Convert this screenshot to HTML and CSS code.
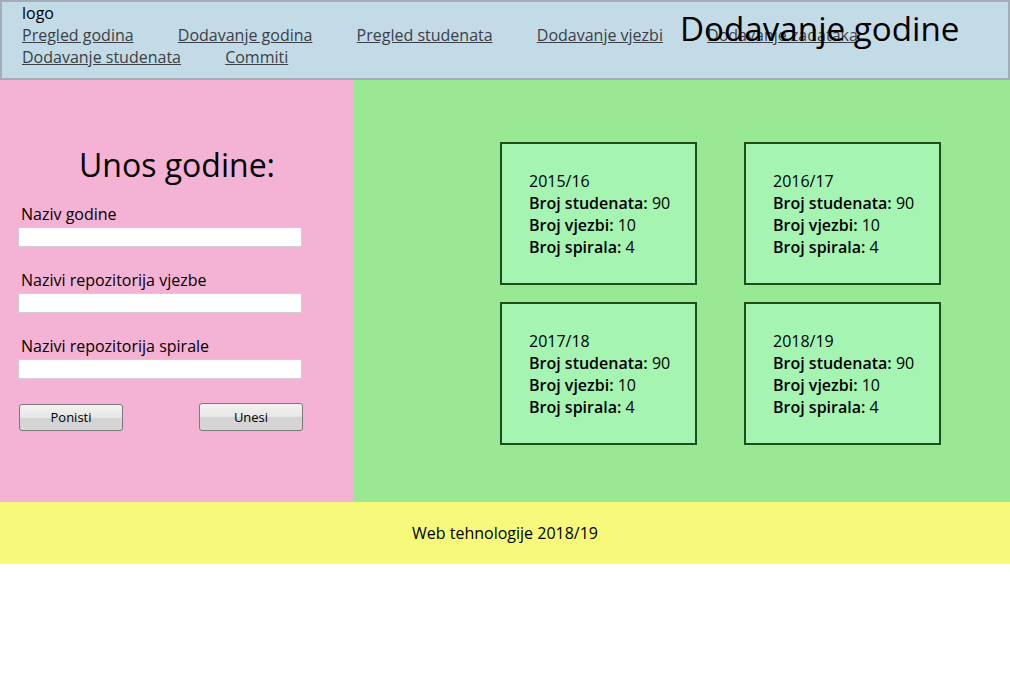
FILE: index.html
```html
<!DOCTYPE html>
<html lang="hr">
<head>
<meta charset="utf-8">
<title>Dodavanje godine</title>
<link rel="stylesheet" href="styles.css">
</head>
<body>
<header class="header">
  <div class="logo">logo</div>
  <nav class="nav">
    <a href="#" class="nav-link">Pregled godina</a>
    <a href="#" class="nav-link">Dodavanje godina</a>
    <a href="#" class="nav-link">Pregled studenata</a>
    <a href="#" class="nav-link">Dodavanje vjezbi</a>
    <a href="#" class="nav-link">Dodavanje zadataka</a>
    <a href="#" class="nav-link">Dodavanje studenata</a>
    <a href="#" class="nav-link">Commiti</a>
  </nav>
  <h1 class="page-title">Dodavanje godine</h1>
</header>
<div class="content">
  <aside class="side">
    <h2 class="side-title">Unos godine:</h2>
    <form class="form">
      <label class="field">
        <span class="field-label">Naziv godine</span>
        <input class="field-input" type="text">
      </label>
      <label class="field">
        <span class="field-label">Nazivi repozitorija vjezbe</span>
        <input class="field-input" type="text">
      </label>
      <label class="field">
        <span class="field-label">Nazivi repozitorija spirale</span>
        <input class="field-input" type="text">
      </label>
      <div class="buttons">
        <button type="reset" class="btn btn-reset">Ponisti</button>
        <button type="submit" class="btn btn-submit">Unesi</button>
      </div>
    </form>
  </aside>
  <main class="main">
    <div class="cards">
      <div class="card">
        <div>2015/16</div>
        <div><b>Broj studenata:</b> 90</div>
        <div><b>Broj vjezbi:</b> 10</div>
        <div><b>Broj spirala:</b> 4</div>
      </div>
      <div class="card">
        <div>2016/17</div>
        <div><b>Broj studenata:</b> 90</div>
        <div><b>Broj vjezbi:</b> 10</div>
        <div><b>Broj spirala:</b> 4</div>
      </div>
      <div class="card">
        <div>2017/18</div>
        <div><b>Broj studenata:</b> 90</div>
        <div><b>Broj vjezbi:</b> 10</div>
        <div><b>Broj spirala:</b> 4</div>
      </div>
      <div class="card">
        <div>2018/19</div>
        <div><b>Broj studenata:</b> 90</div>
        <div><b>Broj vjezbi:</b> 10</div>
        <div><b>Broj spirala:</b> 4</div>
      </div>
    </div>
  </main>
</div>
<footer class="footer">Web tehnologije 2018/19</footer>
</body>
</html>
```
FILE: styles.css
```css
html, body {
  margin: 0;
  padding: 0;
}
body {
  font-family: "Open Sans", "Noto Sans", sans-serif;
  font-size: 16px;
  color: #000;
  background: #fff;
}
.header {
  position: relative;
  box-sizing: border-box;
  height: 80px;
  background: #c3dbe6;
  border: 2px solid #a3adb8;
  padding: 0 0 0 20px;
  line-height: 22px;
}
.logo {
  height: 22px;
}
.nav {
  line-height: 22px;
}
.nav-link {
  color: #3b4048;
  text-decoration: underline;
  margin-right: 40px;
  white-space: nowrap;
}
.page-title {
  position: absolute;
  left: 678px;
  top: 5px;
  margin: 0;
  font-size: 33.2px;
  font-weight: normal;
  line-height: 44px;
  color: #000;
}
.content {
  display: flex;
  height: 422px;
}
.side {
  box-sizing: border-box;
  width: 354px;
  background: #f4b3d4;
  padding: 0 0 0 18px;
}
.side-title {
  margin: 63px 0 0 -18px;
  text-align: center;
  font-size: 32px;
  font-weight: normal;
  line-height: 44px;
}
.form {
  margin-top: 16px;
}
.field {
  display: block;
  margin-bottom: 22px;
}
.field-label {
  display: block;
  padding-left: 3px;
  line-height: 22px;
}
.field-input {
  display: block;
  box-sizing: border-box;
  width: 284px;
  height: 20px;
  margin: 2px 0 0;
  border: 1px solid #cfcfd6;
  border-radius: 2px;
  background: #fff;
  padding: 0 3px;
}
.buttons {
  display: flex;
  justify-content: space-between;
  align-items: center;
  width: 284px;
  margin-top: 24px;
  padding-left: 1px;
}
.btn {
  box-sizing: border-box;
  width: 104px;
  border: 1px solid #7a7a7a;
  border-radius: 3px;
  background: linear-gradient(#f2f2f2 0%, #e6e6e6 50%, #d3d3d3 51%, #d6d6d6 100%);
  font-family: "Open Sans", "Noto Sans", sans-serif;
  font-size: 13px;
  color: #000;
  padding: 0;
}
.btn-reset {
  height: 27px;
}
.btn-submit {
  height: 28px;
}
.main {
  flex: 1;
  background: #98e894;
}
.cards {
  display: grid;
  grid-template-columns: 197px 197px;
  grid-auto-rows: 143px;
  gap: 17px 47px;
  padding: 62px 0 0 146px;
}
.card {
  box-sizing: border-box;
  border: 2px solid #1f4f17;
  background: #a6f4b2;
  padding: 26px 0 0 27px;
  line-height: 22px;
}
.card b {
  font-weight: 600;
}
.footer {
  height: 62px;
  background: #f6f97a;
  text-align: center;
  line-height: 62px;
}
```
